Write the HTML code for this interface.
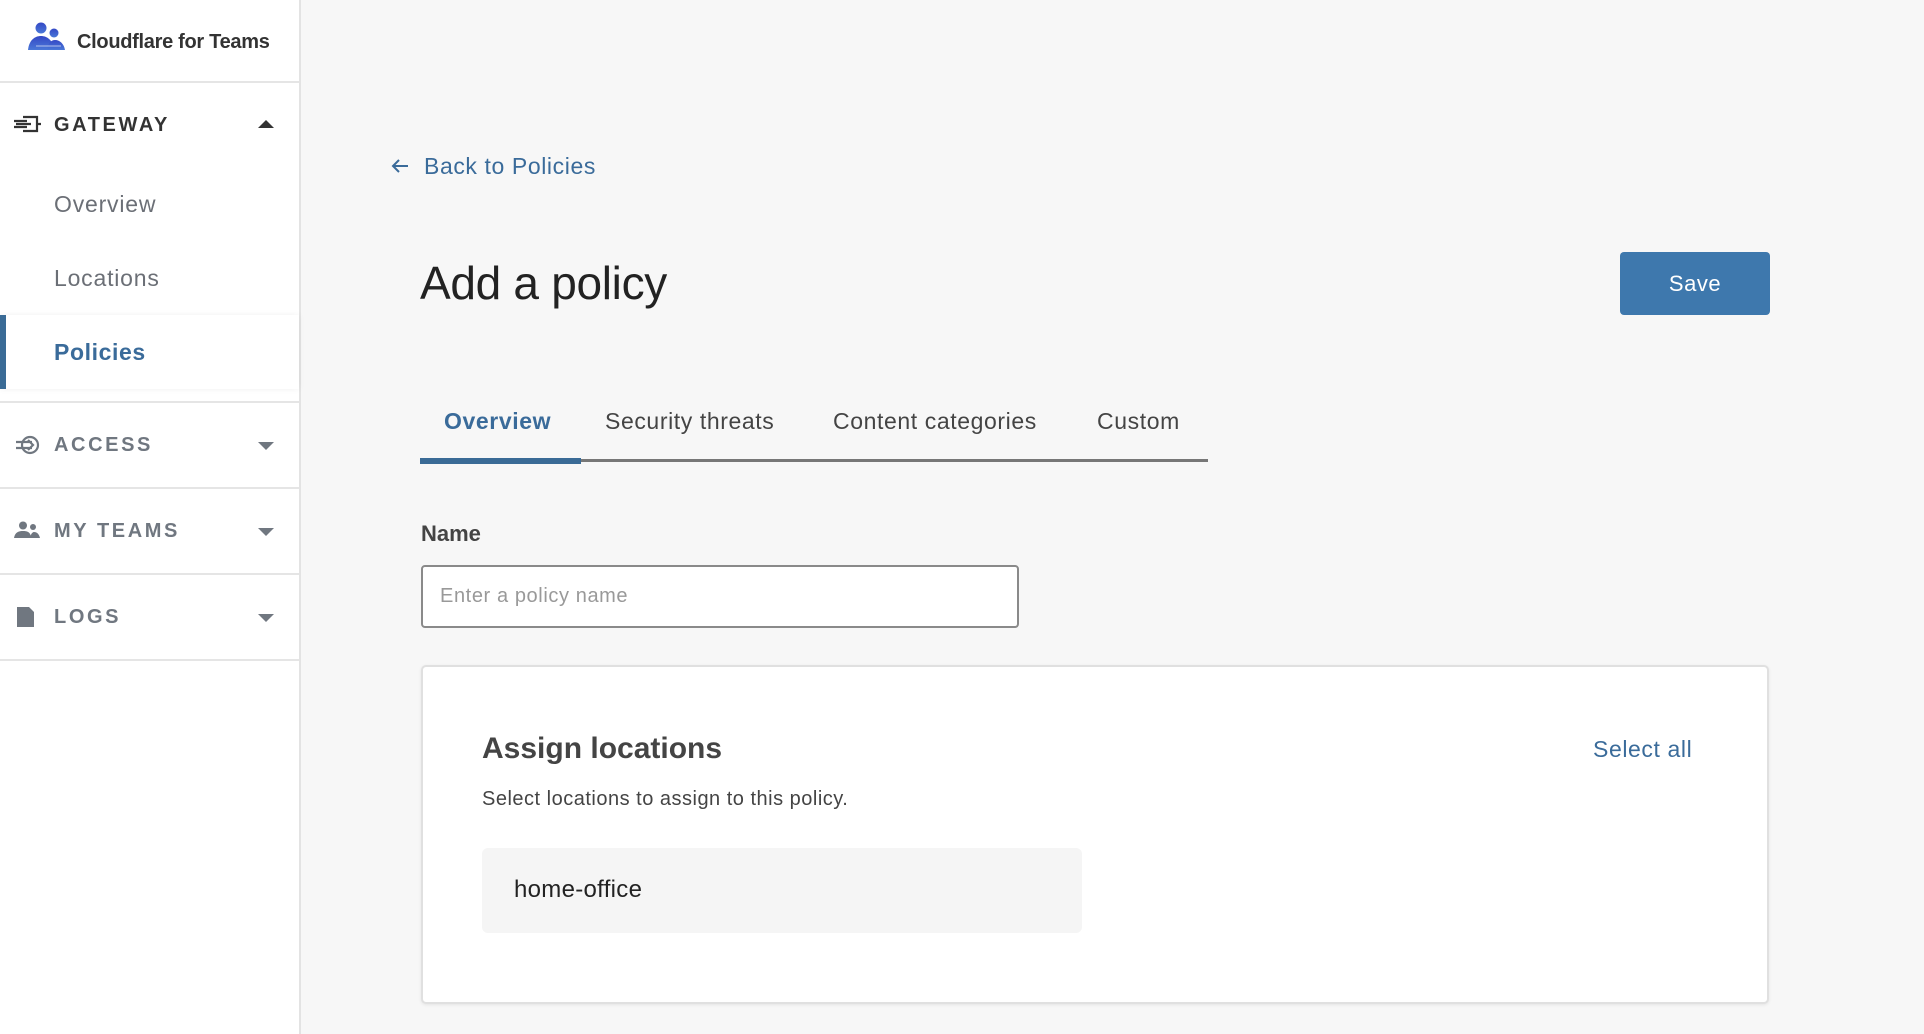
<!DOCTYPE html>
<html><head><style>
*{box-sizing:border-box;margin:0;padding:0}
body{width:1924px;height:1034px;background:#f7f7f7;font-family:"Liberation Sans",sans-serif;position:relative;overflow:hidden}
.sb{position:absolute;left:0;top:0;width:301px;height:1034px;background:#fff;border-right:2px solid #e3e3e3}
.hr{position:absolute;left:0;width:299px;height:2px;background:#e5e5e5}
.t{position:absolute;white-space:nowrap}
.sec{font-size:20px;font-weight:bold;letter-spacing:2.6px;color:#707780}
.sub{font-size:23px;color:#6b6f76;left:54px;letter-spacing:0.8px}
.car{position:absolute;left:258px;width:0;height:0;border-left:8px solid transparent;border-right:8px solid transparent}
.tab{font-size:23px;color:#444;letter-spacing:0.6px}
</style></head><body>
<div class="sb">
 <svg style="position:absolute;left:27px;top:22px" width="40" height="30" viewBox="0 0 40 30"><defs><linearGradient id="g" x1="0" y1="0" x2="0" y2="1"><stop offset="0" stop-color="#3448c5"/><stop offset="1" stop-color="#4a78d8"/></linearGradient></defs><circle cx="14" cy="6" r="5.5" fill="url(#g)"/><circle cx="27" cy="11" r="4.5" fill="url(#g)"/><path d="M1 28C2 18 8 14 14 14C20 14 26 18 27 28Z" fill="url(#g)"/><path d="M20 28C21 21 24 18 28 18C33 18 37 22 38 28Z" fill="url(#g)"/><path d="M9 24H34" stroke="#fff" stroke-width="1" opacity=".6"/></svg>
 <div class="t" style="left:77px;top:31px;font-size:20px;font-weight:bold;color:#333;letter-spacing:-0.3px">Cloudflare for Teams</div>
 <div class="hr" style="top:81px"></div>
 <svg style="position:absolute;left:13px;top:114px" width="28" height="20" viewBox="0 0 28 20"><path d="M10 3H24V17H10M24 10H28M1 7H14M3 10H18M1 13H14" stroke="#333" stroke-width="2.2" fill="none"/></svg>
 <div class="t sec" style="left:54px;top:114px;color:#333">GATEWAY</div>
 <div class="car" style="top:120px;border-bottom:8px solid #333"></div>
 <div class="t sub" style="top:191px">Overview</div>
 <div class="t sub" style="top:265px">Locations</div>
 <div style="position:absolute;left:0;top:315px;width:299px;height:74px;background:#fff;box-shadow:0 0 6px rgba(0,0,0,.06)"></div>
 <div style="position:absolute;left:0;top:315px;width:6px;height:74px;background:#3a6b96"></div>
 <div class="t" style="left:54px;top:339px;font-size:23px;font-weight:bold;color:#3a6b9a;letter-spacing:0.6px">Policies</div>
 <div class="hr" style="top:401px"></div>
 <svg style="position:absolute;left:15px;top:434px" width="26" height="22" viewBox="0 0 26 22"><circle cx="15" cy="11" r="8" stroke="#707780" stroke-width="2.2" fill="none"/><path d="M1 8H17M1 14H17M13 6L18 11L13 16" stroke="#707780" stroke-width="2.2" fill="none"/></svg>
 <div class="t sec" style="left:54px;top:434px">ACCESS</div>
 <div class="car" style="top:442px;border-top:8px solid #707780"></div>
 <div class="hr" style="top:487px"></div>
 <svg style="position:absolute;left:13px;top:521px" width="28" height="18" viewBox="0 0 28 18"><circle cx="10" cy="4.5" r="4" fill="#707780"/><circle cx="20" cy="6" r="3" fill="#707780"/><path d="M1 17C2 11 6 10 10 10C14 10 18 11 18 17Z M17 17C18 12 20 11 21 11C24 11 26 13 27 17Z" fill="#707780"/></svg>
 <div class="t sec" style="left:54px;top:520px">MY TEAMS</div>
 <div class="car" style="top:528px;border-top:8px solid #707780"></div>
 <div class="hr" style="top:573px"></div>
 <svg style="position:absolute;left:17px;top:607px" width="18" height="20" viewBox="0 0 18 20"><path d="M0 0H12L17 5V20H0Z" fill="#707780"/></svg>
 <div class="t sec" style="left:54px;top:606px">LOGS</div>
 <div class="car" style="top:614px;border-top:8px solid #707780"></div>
 <div class="hr" style="top:659px"></div>
</div>

<svg style="position:absolute;left:390px;top:157px" width="20" height="18" viewBox="0 0 20 18"><path d="M18 9H3M9 3L3 9L9 15" stroke="#3a6b9a" stroke-width="2" fill="none"/></svg>
<div class="t" style="left:424px;top:153px;font-size:23px;color:#3a6b9a;letter-spacing:0.6px">Back to Policies</div>
<div class="t" style="left:420px;top:256px;font-size:46px;color:#222;letter-spacing:-0.3px">Add a policy</div>
<div style="position:absolute;left:1620px;top:252px;width:150px;height:63px;background:#3e78ad;border-radius:4px;color:#fff;font-size:22px;text-align:center;line-height:63px;letter-spacing:0.5px">Save</div>

<div style="position:absolute;left:420px;top:459px;width:788px;height:3px;background:#777"></div>
<div style="position:absolute;left:420px;top:458px;width:161px;height:6px;background:#3a6b96"></div>
<div class="t tab" style="left:444px;top:408px;font-weight:bold;color:#3a6b9a">Overview</div>
<div class="t tab" style="left:605px;top:408px">Security threats</div>
<div class="t tab" style="left:833px;top:408px">Content categories</div>
<div class="t tab" style="left:1097px;top:408px">Custom</div>

<div class="t" style="left:421px;top:521px;font-size:22px;font-weight:bold;color:#444">Name</div>
<div style="position:absolute;left:421px;top:565px;width:598px;height:63px;background:#fff;border:2px solid #8a8a8a;border-radius:4px"></div>
<div class="t" style="left:440px;top:585px;font-size:20px;color:#999;letter-spacing:0.6px">Enter a policy name</div>

<div style="position:absolute;left:421px;top:665px;width:1348px;height:339px;background:#fff;border:2px solid #e0e0e0;border-radius:5px;box-shadow:0 1px 3px rgba(0,0,0,.08)"></div>
<div class="t" style="left:482px;top:732px;font-size:30px;font-weight:bold;color:#444">Assign locations</div>
<div class="t" style="left:1593px;top:736px;font-size:23px;color:#3a6b9a;letter-spacing:0.6px">Select all</div>
<div class="t" style="left:482px;top:788px;font-size:20px;color:#444;letter-spacing:0.5px">Select locations to assign to this policy.</div>
<div style="position:absolute;left:482px;top:848px;width:600px;height:85px;background:#f5f5f5;border-radius:6px"></div>
<div class="t" style="left:514px;top:876px;font-size:24px;color:#222;letter-spacing:0.3px">home-office</div>
</body></html>
